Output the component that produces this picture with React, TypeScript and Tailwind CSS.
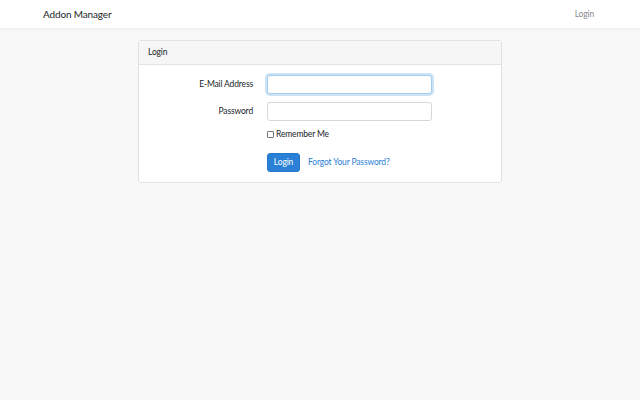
export default function App() {
  return (
    <div className="min-h-[400px] bg-[#f8f8f8] text-[#212529] font-['Lato','Liberation_Sans',sans-serif] text-[8.5px] tracking-[-0.15px]">
      {/* navbar */}
      <nav className="h-[28px] bg-white flex items-center justify-between pl-[43px] pr-[46px] shadow-[0_1px_2px_rgba(0,0,0,0.06)]">
        <span className="text-[10px] text-[#212529]">Addon Manager</span>
        <a className="text-[8.5px] text-[#8a8a8a]">Login</a>
      </nav>

      <main className="pt-[12px] flex justify-center">
        <div className="w-[364px] bg-white border border-[#e2e2e2] rounded-[3px]">
          <div className="h-[24px] px-[9px] flex items-center bg-[#f6f6f6] border-b border-[#e2e2e2]">
            Login
          </div>
          <div className="px-[9px] pt-[10px] pb-[10px]">
            <div className="flex items-center h-[19px]">
              <label className="w-[105px] text-right">E-Mail Address</label>
              <input
                type="email"
                className="ml-[14px] w-[165px] h-[19px] rounded-[3px] border border-[#a1cbef] bg-white outline-none shadow-[0_0_0_2px_rgba(52,144,220,0.25)]"
              />
            </div>
            <div className="flex items-center h-[19px] mt-[8px]">
              <label className="w-[105px] text-right">Password</label>
              <input
                type="password"
                className="ml-[14px] w-[165px] h-[19px] rounded-[3px] border border-[#d4d8dc] bg-white outline-none"
              />
            </div>
            <div className="flex items-center mt-[8px] h-[11px] pl-[119px]">
              <input
                type="checkbox"
                className="appearance-none w-[7px] h-[7px] m-0 mr-[2px] border border-[#767676] rounded-[1px] bg-white"
              />
              <span>Remember Me</span>
            </div>
            <div className="flex items-center mt-[13px] pl-[119px]">
              <button className="h-[19px] w-[33px] rounded-[3px] bg-[#2a80d6] border border-[#2677c9] text-white text-[8.5px]">
                Login
              </button>
              <a className="ml-[8px] text-[#2a80d6]">Forgot Your Password?</a>
            </div>
          </div>
        </div>
      </main>
    </div>
  );
}
